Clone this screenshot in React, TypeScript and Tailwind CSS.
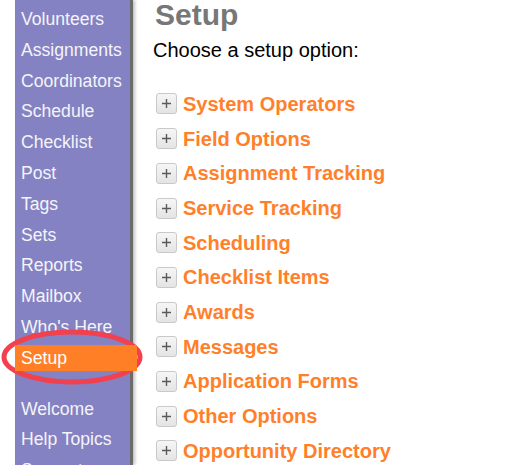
import React from 'react';

const NAV_TOP = ['Volunteers', 'Assignments', 'Coordinators', 'Schedule', 'Checklist', 'Post', 'Tags', 'Sets', 'Reports', 'Mailbox', "Who's Here", 'Setup'];
const NAV_BOTTOM = ['Welcome', 'Help Topics', 'Support'];

const OPTIONS = [
  'System Operators',
  'Field Options',
  'Assignment Tracking',
  'Service Tracking',
  'Scheduling',
  'Checklist Items',
  'Awards',
  'Messages',
  'Application Forms',
  'Other Options',
  'Opportunity Directory',
];

const NavItem: React.FC<{ label: string; active?: boolean }> = ({ label, active }) => (
  <div
    className={
      active
        ? 'relative z-10 h-[26px] mb-[4.8px] w-[122px] pl-[6px] leading-[26px] text-[17.6px] text-white bg-[#ff7f27]'
        : 'h-[26px] mb-[4.8px] pl-[6px] leading-[26px] text-[17.6px] text-[#f4f4fa] whitespace-nowrap'
    }
  >
    {label}
  </div>
);

const PlusButton: React.FC = () => (
  <span className="w-[21px] h-[21px] shrink-0 rounded-[3px] border border-[#c9c9c9] bg-gradient-to-b from-[#f6f6f6] to-[#e4e4e4] flex items-center justify-center">
    <svg width="11" height="11" viewBox="0 0 11 11">
      <path d="M5.5 1v9M1 5.5h9" stroke="#5a5a5a" strokeWidth="1.4" />
    </svg>
  </span>
);

export default function App() {
  return (
    <div
      className="relative flex w-[510px] h-[465px] overflow-hidden bg-white"
      style={{ fontFamily: '"Liberation Sans", Arial, sans-serif' }}
    >
      <div className="w-[15px] shrink-0" />

      <nav className="w-[118px] shrink-0 bg-[#8482c2] border-r-[3px] border-[#6b6b6b] pt-[6px] shadow-[2px_0_3px_rgba(0,0,0,0.25)]">
        {NAV_TOP.map((l) => (
          <NavItem key={l} label={l} active={l === 'Setup'} />
        ))}
        <div className="h-[20px]" />
        {NAV_BOTTOM.map((l) => (
          <NavItem key={l} label={l} />
        ))}
      </nav>

      <main className="pl-[22px]">
        <h1 className="text-[30px] leading-[30px] font-bold text-[#777777]">Setup</h1>
        <p className="mt-[8.4px] text-[20px] leading-[24px] text-black -ml-[2px]">Choose a setup option:</p>
        <ul className="mt-[24.25px]">
          {OPTIONS.map((o) => (
            <li key={o} className="h-[34.7px] flex items-center gap-[6px] pl-[1px]">
              <PlusButton />
              <span className="text-[20px] font-bold text-[#ff7f2a] whitespace-nowrap">{o}</span>
            </li>
          ))}
        </ul>
      </main>

      <svg className="absolute left-0 top-0 pointer-events-none" width="160" height="400">
        <ellipse cx="72" cy="357" rx="68" ry="25" fill="none" stroke="#f2404e" strokeWidth="5" />
      </svg>
    </div>
  );
}
